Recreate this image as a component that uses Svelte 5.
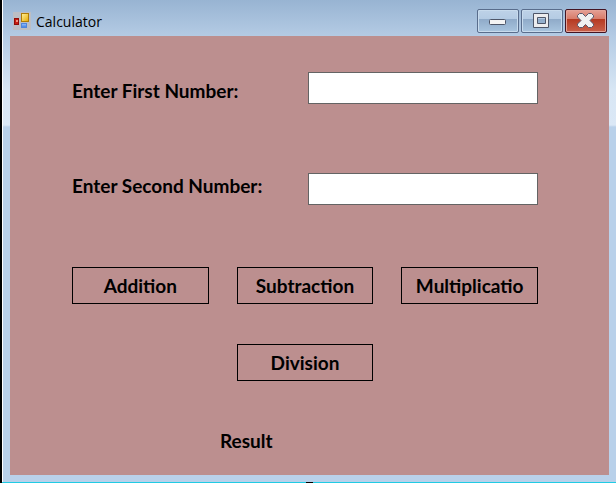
<script>
  let first = $state('');
  let second = $state('');
  let result = $state('Result');

  const calculate = (fn) => {
    const value = fn(Number(first), Number(second));
    result = Number.isFinite(value) ? String(value) : 'Result';
  };
</script>

<main class="window">
  <header class="titlebar">
    <svg class="app-icon" width="18" height="18" viewBox="0 0 18 18" aria-hidden="true">
      <defs>
        <linearGradient id="gold" x2="1" y2="1"><stop stop-color="#fff3a0" /><stop offset="1" stop-color="#e7a900" /></linearGradient>
        <linearGradient id="blue" x2="0" y2="1"><stop stop-color="#9cc4ff" /><stop offset="1" stop-color="#3c7be0" /></linearGradient>
      </defs>
      <rect width="18" height="18" fill="#bcbec4" />
      <rect x="1.5" y="6.5" width="4" height="6" fill="#c81c10" stroke="#8e0d08" />
      <rect x="3" y="8" width="2" height="2" fill="#f4907c" />
      <rect x="8.5" y="1.5" width="7" height="8" fill="url(#gold)" stroke="#b07c05" />
      <rect x="8.5" y="11.5" width="5" height="4" fill="url(#blue)" stroke="#4f86dc" />
    </svg>
    <h1>Calculator</h1>
    <div class="controls">
      <button class="control" aria-label="Minimize">
        <svg width="18" height="16" viewBox="0 0 18 16"><rect x=".5" y="6.5" width="16" height="5" rx="1" fill="#f4f4f4" stroke="#4e5668" /></svg>
      </button>
      <button class="control" aria-label="Maximize">
        <svg width="18" height="16" viewBox="0 0 18 16"><path d="M.5 .5H15.500V14.500H.5ZM4.500 4.500V10.500H12.500V4.500Z" fill="#ececee" fill-rule="evenodd" stroke="#4e5668" /></svg>
      </button>
      <button class="control close" aria-label="Close">
        <svg width="18" height="16" viewBox="0 0 18 16"><path d="M2.500 .5H5.500L8.500 3.500L11.500 .5H14.500L16.500 2.500V4L13 7.500L16.500 11V12.500L14.500 14.500H11.500L8.500 11.500L5.500 14.500H2.500L.5 12.500V11L4 7.500L.5 4V2.500Z" fill="#f0f0f0" stroke="#59566a" stroke-linejoin="round" /></svg>
      </button>
    </div>
  </header>

  <section class="client">
    <div class="field">
      <label for="first">Enter First Number:</label>
      <input id="first" type="text" bind:value={first} />
    </div>
    <div class="field second">
      <label for="second">Enter Second Number:</label>
      <input id="second" type="text" bind:value={second} />
    </div>
    <div class="operations">
      <button class="operation" onclick={() => calculate((a, b) => a + b)}>Addition</button>
      <button class="operation" onclick={() => calculate((a, b) => a - b)}>Subtraction</button>
      <button class="operation" onclick={() => calculate((a, b) => a * b)}>Multiplicatio</button>
      <button class="operation division" onclick={() => calculate((a, b) => a / b)}>Division</button>
    </div>
    <output for="first second">{result}</output>
  </section>
  <div class="grip"></div>
</main>

<style>
  :global(body) {
    margin: 0;
  }

  .window {
    box-sizing: border-box;
    display: flex;
    flex-direction: column;
    min-height: 100vh;
    padding: 0 7px 0 10px;
    background:
      linear-gradient(90deg, #000 2px, #fff 2px 3px, transparent 3px),
      linear-gradient(#98b4d2 0, #b4cbe4 36px, #d8e6f4 90px, #dbe8f6 125px, #b9d1ea 127px);
  }

  .titlebar {
    display: flex;
    align-items: center;
    height: 36px;
    padding-right: 2px;
  }

  .app-icon {
    margin: 5px 5px 0 3px;
  }

  h1 {
    flex: 1;
    margin: 8px 0 0;
    font: 400 14px/20px 'Open Sans', 'Noto Sans', sans-serif;
    color: #000;
  }

  .controls {
    display: flex;
    gap: 2px;
    margin-top: 6px;
  }

  .control {
    box-sizing: border-box;
    display: flex;
    align-items: center;
    justify-content: center;
    width: 42px;
    height: 24px;
    padding: 0;
    border: 1px solid #596d8c;
    border-radius: 2px;
    background: linear-gradient(#bed2e8 0, #b4cbe3 42%, #90abc9 43%, #a9c5df 100%);
    box-shadow: inset 0 0 0 1px #c8dbed;
  }

  .close {
    border-color: #431422;
    background: linear-gradient(#e5a095 0, #d77a68 42%, #b63a22 43%, #c9614b 100%);
    box-shadow: inset 0 0 0 1px #e4a398;
  }

  .client {
    flex: 1;
    padding: 36px 71px 20px 62px;
    background: #bc8f8f;
    font: 700 19px/26px Lato, Carlito, sans-serif;
    color: #000;
  }

  .field {
    display: flex;
    align-items: flex-end;
    justify-content: space-between;
  }

  .second {
    align-items: flex-start;
    margin-top: 69px;
  }

  input {
    box-sizing: border-box;
    width: 230px;
    height: 32px;
    padding: 2px 4px;
    border: 1px solid #646464;
    background: #fff;
    font: inherit;
  }

  .operations {
    display: grid;
    grid-template-columns: repeat(3, 1fr);
    gap: 40px 28px;
    margin-top: 62px;
  }

  .operation {
    min-width: 0;
    height: 37px;
    padding: 0;
    border: 1px solid #000;
    background: transparent;
    font: inherit;
    color: inherit;
  }

  .division {
    grid-column: 2;
  }

  output {
    display: block;
    margin: 47px 0 0 148px;
  }

  .grip {
    height: 8px;
    margin: 0 -7px 0 -8px;
    background:
      linear-gradient(#000, #000) 50% 100% / 7px 1px no-repeat,
      linear-gradient(#20cbe4, #20cbe4) 0 100% / 100% 1px no-repeat;
  }
</style>
